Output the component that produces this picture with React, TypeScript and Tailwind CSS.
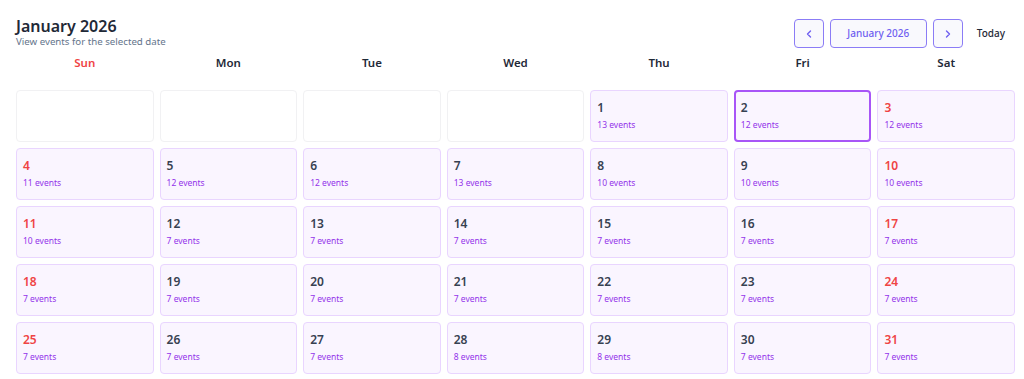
import React from "react";

const weekdays = ["Sun", "Mon", "Tue", "Wed", "Thu", "Fri", "Sat"];
const counts: Record<number, number> = {
  1: 13, 2: 12, 3: 12, 4: 11, 5: 12, 6: 12, 7: 13, 8: 10, 9: 10, 10: 10,
  11: 10, 12: 7, 13: 7, 14: 7, 15: 7, 16: 7, 17: 7, 18: 7, 19: 7, 20: 7,
  21: 7, 22: 7, 23: 7, 24: 7, 25: 7, 26: 7, 27: 7, 28: 8, 29: 8, 30: 7, 31: 7,
};

export default function App() {
  const cells: (number | null)[] = [null, null, null, null];
  for (let d = 1; d <= 31; d++) cells.push(d);

  return (
    <div
      className="w-[1024px] h-[379px] bg-white pl-4 pr-[9px] pt-[16px]"
      style={{ fontFamily: "'Noto Sans', 'Open Sans', sans-serif" }}
    >
      <div className="flex items-start justify-between">
        <div>
          <h1 className="text-[16px] leading-[21px] font-semibold text-[#1f2937]">January 2026</h1>
          <p className="text-[9.7px] leading-[10px] text-[#64748b]">View events for the selected date</p>
        </div>
        <div className="flex items-center mt-[3px] mr-[10px]">
          <button className="w-[30px] h-[29px] rounded-[4px] border border-[#8b7cf6] bg-[#f9f9fd] flex items-center justify-center text-[#6f5ff0]">
            <svg width="8" height="10" viewBox="0 0 8 10" fill="none"><path d="M5.5 2 L2.5 5 L5.5 8" stroke="currentColor" strokeWidth="1.4" strokeLinecap="round" strokeLinejoin="round" /></svg>
          </button>
          <button className="ml-[6px] w-[97px] h-[29px] rounded-[4px] border border-[#8b7cf6] bg-[#f9f9fd] text-[10px] font-medium text-[#6f5ff0]">
            January 2026
          </button>
          <button className="ml-[6px] w-[30px] h-[29px] rounded-[4px] border border-[#8b7cf6] bg-[#f9f9fd] flex items-center justify-center text-[#6f5ff0]">
            <svg width="8" height="10" viewBox="0 0 8 10" fill="none"><path d="M2.5 2 L5.5 5 L2.5 8" stroke="currentColor" strokeWidth="1.4" strokeLinecap="round" strokeLinejoin="round" /></svg>
          </button>
          <button className="ml-[14px] text-[10px] font-medium text-[#1f2937]">Today</button>
        </div>
      </div>

      <div className="grid grid-cols-7 gap-x-[6px] mt-[8px]">
        {weekdays.map((w, i) => (
          <div
            key={w}
            className={`h-[14px] text-center text-[11.5px] leading-[14px] font-semibold ${i === 0 ? "text-[#ef4444]" : "text-[#1f2937]"}`}
          >
            {w}
          </div>
        ))}
      </div>

      <div className="grid grid-cols-7 gap-x-[6px] gap-y-[6px] mt-[20px]">
        {cells.map((d, i) => {
          if (d === null) {
            return <div key={i} className="h-[52px] rounded-[4px] border border-[#f1f1f3] bg-white" />;
          }
          const col = i % 7;
          const weekend = col === 0 || col === 6;
          const selected = d === 2;
          return (
            <div
              key={i}
              className={`h-[52px] rounded-[4px] bg-[#faf5ff] px-[6px] pt-[10px] ${selected ? "border-2 border-[#a855f7]" : "border border-[#e9d5ff]"}`}
            >
              <div className={`text-[12px] leading-[14px] font-semibold ${selected ? "-mt-px -ml-px" : ""} ${weekend ? "text-[#ef4444]" : "text-[#374151]"}`}>
                {d}
              </div>
              <div className={`mt-[5px] text-[8.5px] leading-[10px] text-[#9333ea] ${selected ? "-ml-px" : ""}`}>
                {counts[d]} events
              </div>
            </div>
          );
        })}
      </div>
    </div>
  );
}
